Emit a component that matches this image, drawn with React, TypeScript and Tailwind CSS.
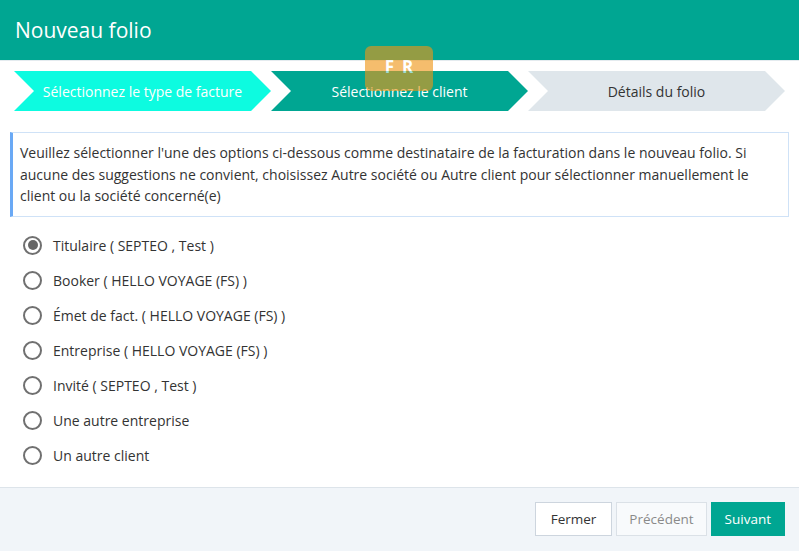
import React from 'react';

const options = [
  { label: 'Titulaire ( SEPTEO , Test )', checked: true },
  { label: 'Booker ( HELLO VOYAGE (FS) )' },
  { label: 'Émet de fact. ( HELLO VOYAGE (FS) )' },
  { label: 'Entreprise ( HELLO VOYAGE (FS) )' },
  { label: 'Invité ( SEPTEO , Test )' },
  { label: 'Une autre entreprise' },
  { label: 'Un autre client' },
];

const chevron = {
  clipPath: 'polygon(0 0, calc(100% - 20px) 0, 100% 50%, calc(100% - 20px) 100%, 0 100%, 20px 50%)',
};

function Step({ label, className }: { label: string; className: string }) {
  return (
    <div
      style={chevron}
      className={`w-[257px] h-10 flex items-center justify-center text-[14px] ${className}`}
    >
      {label}
    </div>
  );
}

function Radio({ checked }: { checked?: boolean }) {
  return (
    <span className="w-[19px] h-[19px] rounded-full border-2 border-[#707070] flex items-center justify-center shrink-0">
      {checked && <span className="w-[10px] h-[10px] rounded-full bg-[#666]" />}
    </span>
  );
}

export default function App() {
  return (
    <div
      className="relative w-[799px] h-[551px] flex flex-col bg-white text-[#333]"
      style={{ fontFamily: '"Open Sans", "Liberation Sans", sans-serif' }}
    >
      <div className="h-[60px] bg-[#00a692] flex items-center px-[15px]">
        <h1 className="text-white text-[21px] leading-none">Nouveau folio</h1>
      </div>
      <div className="h-px bg-[#e4ebef]" />

      <div className="flex px-[14px] mt-[10px]">
        <Step label="Sélectionnez le type de facture" className="bg-[#0dfbe0] text-white" />
        <Step label="Sélectionnez le client" className="bg-[#00a692] text-white" />
        <Step label="Détails du folio" className="bg-[#dfe6eb] text-[#333]" />
      </div>

      <div className="mx-[10px] mt-[21px] border border-[#cfe2f7] border-l-[3px] border-l-[#6aa9f5] pl-[7px] pr-[10px] py-[9px] text-[14px] leading-[21.5px]">
        Veuillez sélectionner l'une des options ci-dessous comme destinataire de la facturation dans le nouveau folio. Si aucune des suggestions ne convient, choisissez Autre société ou Autre client pour sélectionner manuellement le client ou la société concerné(e)
      </div>

      <div className="mt-[11px] pl-[23px] flex flex-col">
        {options.map((o) => (
          <label key={o.label} className="h-[35px] flex items-center gap-[11px] text-[14px]">
            <Radio checked={o.checked} />
            <span>{o.label}</span>
          </label>
        ))}
      </div>

      <div className="mt-auto h-[64px] border-t border-[#dde4ea] bg-[#f1f5f9] flex items-start justify-end gap-[4px] pt-[14px] pr-[14px]">
        <button className="h-[34px] px-[15px] bg-white border border-[#cdd5de] text-[13.5px] text-[#333]">
          Fermer
        </button>
        <button className="h-[34px] px-[12px] bg-[#f8fafc] border border-[#dbe1e7] text-[13.5px] text-[#8a8a8a]">
          Précédent
        </button>
        <button className="h-[34px] px-[14px] bg-[#00a692] text-[13.5px] text-white">
          Suivant
        </button>
      </div>

      <div className="absolute left-[365px] top-[46px] w-[68px] h-[45px] rounded-md bg-[#ef9615] opacity-[0.62] flex items-start justify-center pt-[10px] pl-[8px] text-white font-bold text-[17px] leading-[22px] tracking-[8px]">
        FR
      </div>
    </div>
  );
}
